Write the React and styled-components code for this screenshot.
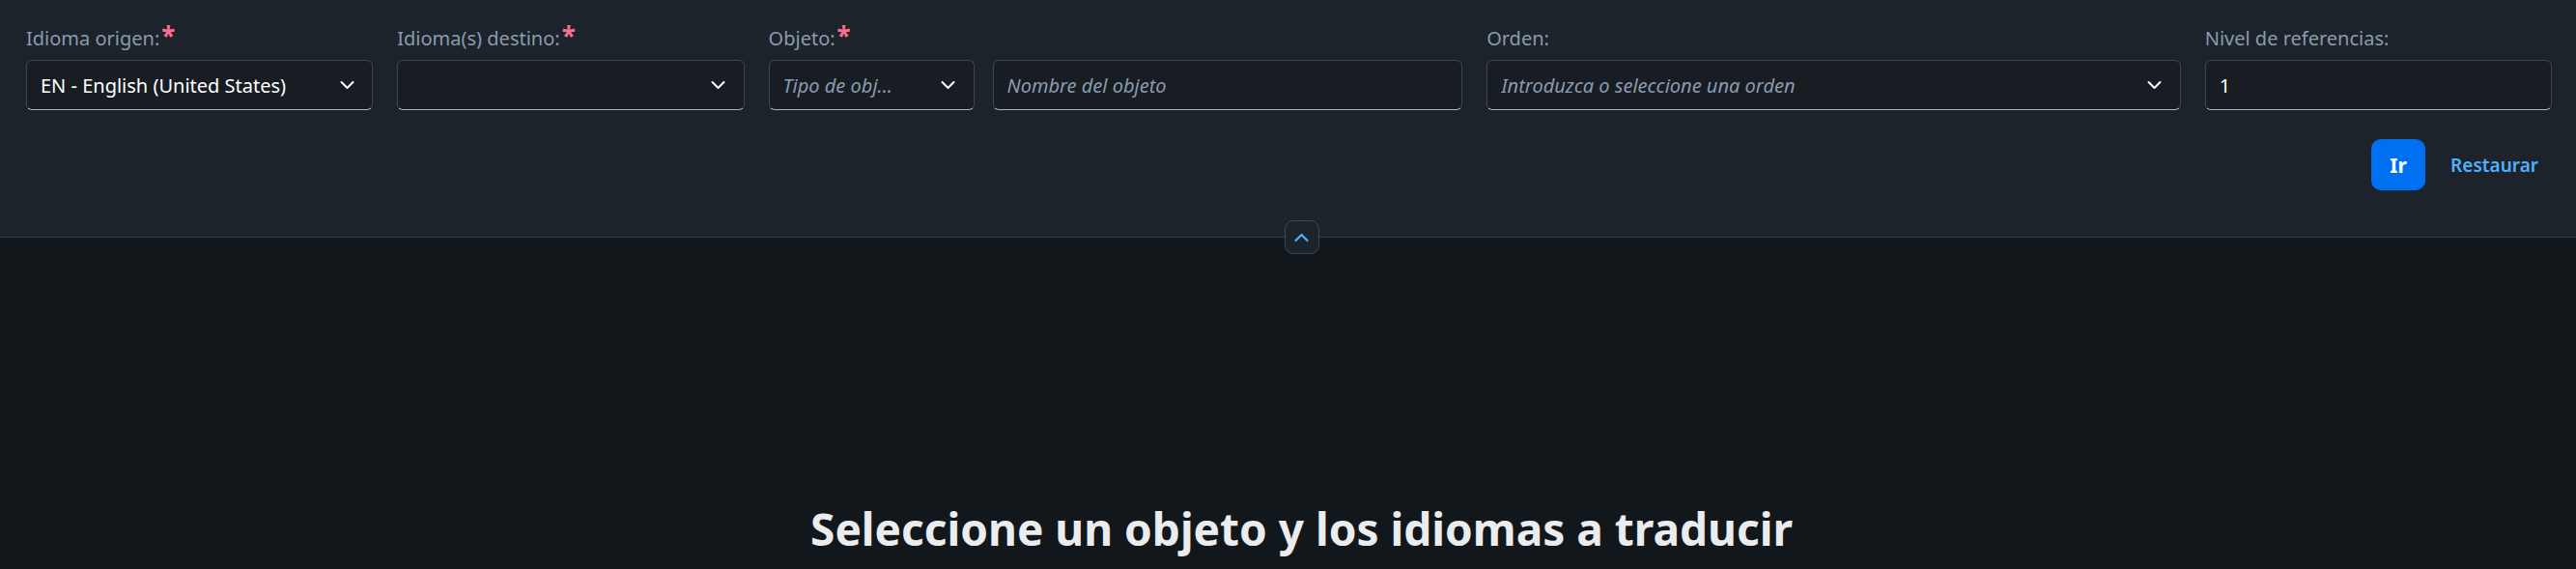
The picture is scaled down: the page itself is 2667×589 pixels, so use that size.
import styled, { createGlobalStyle } from "styled-components";

const GlobalStyle = createGlobalStyle`
  html, body {
    margin: 0;
    padding: 0;
    background: #12171c;
  }
  body {
    font-family: "Noto Sans", "Liberation Sans", sans-serif;
    color: #eaecee;
  }
`;

const ChevronDown = () => (
  <svg width="15" height="10" viewBox="0 0 15 10" fill="none">
    <path d="M1.5 2 L7.5 8 L13.5 2" stroke="#ffffff" strokeWidth="2" strokeLinecap="round" strokeLinejoin="round" />
  </svg>
);

const ChevronUp = () => (
  <svg width="15" height="10" viewBox="0 0 15 10" fill="none">
    <path d="M1.5 8 L7.5 2 L13.5 8" stroke="#4db1ff" strokeWidth="2.2" strokeLinecap="round" strokeLinejoin="round" />
  </svg>
);

const App = () => {
  return (
    <Page>
      <GlobalStyle />
      <FilterBar>
        <Fields>
          <Field>
            <Label required>Idioma origen:</Label>
            <Control>
              <Value>EN - English (United States)</Value>
              <Arrow>
                <ChevronDown />
              </Arrow>
            </Control>
          </Field>
          <Field>
            <Label required>Idioma(s) destino:</Label>
            <Control>
              <Value />
              <Arrow>
                <ChevronDown />
              </Arrow>
            </Control>
          </Field>
          <Field>
            <Label required>Objeto:</Label>
            <Pair>
              <Control>
                <Value placeholder>Tipo de obj...</Value>
                <Arrow>
                  <ChevronDown />
                </Arrow>
              </Control>
              <Control>
                <Value placeholder>Nombre del objeto</Value>
              </Control>
            </Pair>
          </Field>
          <Field>
            <Label>Orden:</Label>
            <Control>
              <Value placeholder>Introduzca o seleccione una orden</Value>
              <Arrow>
                <ChevronDown />
              </Arrow>
            </Control>
          </Field>
          <Field>
            <Label>Nivel de referencias:</Label>
            <Control>
              <Value>1</Value>
            </Control>
          </Field>
        </Fields>
        <Actions>
          <GoButton>Ir</GoButton>
          <LinkButton>Restaurar</LinkButton>
        </Actions>
        <Collapse>
          <ChevronUp />
        </Collapse>
      </FilterBar>
      <Empty>
        <Title>Seleccione un objeto y los idiomas a traducir</Title>
      </Empty>
    </Page>
  );
};

export default App;

const Page = styled.div`
  width: 2667px;
  height: 589px;
  overflow: hidden;
  display: flex;
  flex-direction: column;
`;

const FilterBar = styled.div`
  position: relative;
  background: #1d232a;
  border-bottom: 1px solid #343e49;
  padding: 24px 25px 48px 27px;
  display: flex;
  flex-direction: column;
  gap: 30px;
`;

const Fields = styled.div`
  display: grid;
  grid-template-columns: 1fr 1fr 2fr 2fr 1fr;
  column-gap: 25px;
`;

const Field = styled.div`
  display: flex;
  flex-direction: column;
  gap: 6px;
`;

const Label = styled.div`
  font-size: 20px;
  line-height: 32px;
  color: #8a9bae;
  white-space: nowrap;

  &::after {
    content: ${(p) => (p.required ? '"*"' : "none")};
    color: #fb6e8f;
    font-weight: 700;
    font-size: 26px;
    margin-left: 2px;
    vertical-align: top;
    line-height: 26px;
  }
`;

const Pair = styled.div`
  display: grid;
  grid-template-columns: 213px 1fr;
  column-gap: 19px;
`;

const Control = styled.div`
  box-sizing: border-box;
  height: 52px;
  display: flex;
  align-items: center;
  background: #181c23;
  border: 1px solid #3d4753;
  border-bottom-color: #a9b4be;
  border-radius: 6px;
  padding: 0 0 0 14px;
  min-width: 0;
`;

const Value = styled.div`
  flex: 1;
  min-width: 0;
  font-size: 20px;
  white-space: nowrap;
  overflow: hidden;
  color: ${(p) => (p.placeholder ? "#8a9bae" : "#ffffff")};
  font-style: ${(p) => (p.placeholder ? "italic" : "normal")};
`;

const Arrow = styled.div`
  width: 52px;
  height: 100%;
  display: flex;
  align-items: center;
  justify-content: center;
  flex-shrink: 0;
`;

const Actions = styled.div`
  display: flex;
  justify-content: flex-end;
  align-items: center;
  gap: 12px;
`;

const GoButton = styled.button`
  width: 56px;
  height: 53px;
  border: none;
  border-radius: 10px;
  background: #0070f2;
  color: #ffffff;
  font-family: inherit;
  font-size: 21px;
  font-weight: 700;
`;

const LinkButton = styled.button`
  height: 53px;
  padding: 0 14px;
  border: none;
  background: transparent;
  color: #4db1ff;
  font-family: inherit;
  font-size: 19px;
  font-weight: 600;
`;

const Collapse = styled.div`
  position: absolute;
  left: calc(50% - 4px);
  bottom: -18px;
  box-sizing: border-box;
  width: 36px;
  height: 35px;
  border: 1px solid #3d4753;
  border-radius: 9px;
  background: #1d232a;
  display: flex;
  align-items: center;
  justify-content: center;
`;

const Empty = styled.div`
  flex: 1;
  display: flex;
  align-items: flex-end;
  justify-content: center;
  padding-left: 28px;
`;

const Title = styled.h1`
  margin: 0 0 10px;
  font-size: 46px;
  line-height: 64px;
  font-weight: 700;
  color: #eaecee;
`;
